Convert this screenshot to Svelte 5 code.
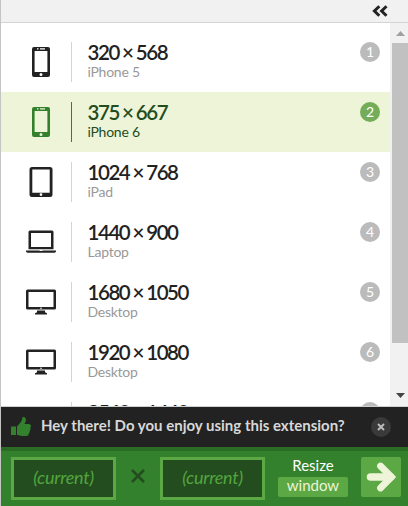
<script>
  const presets = [
    { w: 320, h: 568, name: 'iPhone 5', icon: 'phone' },
    { w: 375, h: 667, name: 'iPhone 6', icon: 'phone' },
    { w: 1024, h: 768, name: 'iPad', icon: 'tablet' },
    { w: 1440, h: 900, name: 'Laptop', icon: 'laptop' },
    { w: 1680, h: 1050, name: 'Desktop', icon: 'desktop' },
    { w: 1920, h: 1080, name: 'Desktop', icon: 'desktop' },
    { w: 2560, h: 1440, name: 'Desktop', icon: 'desktop' }
  ];
  let selected = $state(1);
</script>

<div class="popup">
  <header>
    <svg width="16" height="12" viewBox="0 0 16 12" fill="none" stroke="#222" stroke-width="3">
      <path d="M7.3 1.2 2.4 6l4.9 4.8M14.5 1.2 9.6 6l4.9 4.8" />
    </svg>
  </header>

  <main>
    <ul>
      {#each presets as p, i}
        <li class:active={i === selected}>
          <svg class="device" width="30" height="30" viewBox="0 0 30 30" fill="currentColor">
            {#if p.icon === 'phone'}
              <path fill-rule="evenodd" d="M8 0h14q2 0 2 2v26q0 2-2 2H8q-2 0-2-2V2q0-2 2-2zM8.6 4v21h12.8V4zM11 1.2v1.2h1.5V1.2zM14 1.2v1.3h5V1.2zM15 26a1.5 1.5 0 1 0 0 3 1.5 1.5 0 0 0 0-3z" />
            {:else if p.icon === 'tablet'}
              <path fill-rule="evenodd" d="M6 0h18q2.5 0 2.5 2.5v25q0 2.5-2.5 2.5H6q-2.5 0-2.5-2.5v-25Q3.500 0 6 0zM6.300 2.500v23.200h17.400V2.500zM15 26.200a1.400 1.400 0 1 0 0 2.800 1.400 1.400 0 0 0 0-2.800z" />
            {:else if p.icon === 'laptop'}
              <path fill-rule="evenodd" d="M4 3.500h22q1.500 0 1.500 1.500v17.200h-25V5q0-1.500 1.500-1.500zM5 6v14h20V6zM0 23.400h13.300l.6.7h2.200l.6-.7H30v1q-.5 1.300-2 1.300H2q-1.500 0-2-1.300z" />
            {:else}
              <path fill-rule="evenodd" d="M1.500 2.500h27q1.500 0 1.500 1.500v17q0 1.500-1.500 1.500h-27Q0 22.500 0 21V4q0-1.500 1.500-1.500zM2.500 5v15h25V5zM15 20.500a.8.800 0 1 0 0 1.600.8.800 0 0 0 0-1.600zM11 23.500h8v1.800l2 1v1.200H9v-1.200l2-1z" />
            {/if}
          </svg>
          <div class="info">
            <strong>{p.w} × {p.h}</strong>
            <span>{p.name}</span>
          </div>
          <b class="num">{i + 1}</b>
        </li>
      {/each}
    </ul>
    <div class="scrollbar">
      <svg width="16" height="20" viewBox="0 0 16 20"><path d="M4 13 8.500 8 13 13z" fill="#a0a0a0" /></svg>
      <div class="thumb"></div>
      <svg width="16" height="20" viewBox="0 0 16 20"><path d="M4 10h9L8.500 15z" fill="#444" /></svg>
    </div>
  </main>

  <section class="review">
    <svg width="20" height="20" viewBox="0 0 20 20" fill="#33802d">
      <path d="M0 9.500h5V18H0zM6 9.500l3.500-4Q11.500 3 11.500 0q2.800-.3 3.300 2 .3 2-1.300 5H18q2 .3 2 2 0 1.200-.8 1.800.8 1.700-.5 2.900.4 1.800-.8 2.500 0 2.500-2.700 2.800H11q-2.500-.2-5-1.300z" />
    </svg>
    <p>Hey there! Do you enjoy using this extension?</p>
    <button class="close" aria-label="Close">
      <svg width="8" height="8" viewBox="0 0 8 8"><path d="m1 1 6 6M7 1 1 7" stroke="#bbb" stroke-width="2" /></svg>
    </button>
  </section>

  <form>
    <div class="field">(current)</div>
    <svg class="times" width="14" height="14" viewBox="0 0 14 14"><path d="m1 1 12 12M13 1 1 13" stroke="#234d1e" stroke-width="2.600" /></svg>
    <div class="field">(current)</div>
    <div class="target">
      <span>Resize</span>
      <em>window</em>
    </div>
    <button class="go" type="button" aria-label="Resize">
      <svg width="30" height="30" viewBox="0 0 30 30" fill="none" stroke="#edf4d8" stroke-width="7.500">
        <path d="M4.500 15h20" stroke-linecap="round" /><path d="M14.500 4 25.500 15 14.500 26" stroke-linecap="round" stroke-width="6.800" />
      </svg>
    </button>
  </form>
</div>

<style>
  .popup {
    box-sizing: border-box;
    width: 408px;
    height: 506px;
    border-left: 1px solid #c4c4c4;
    display: flex;
    flex-direction: column;
    overflow: hidden;
    background: #fff;
    color: #222;
    font-family: Lato, sans-serif;
  }
  header {
    box-sizing: border-box;
    flex: none;
    height: 23px;
    padding: 5px 20px 0 0;
    display: flex;
    justify-content: flex-end;
    background: #f1f1f1;
    border-bottom: 1px solid #d4d4d4;
  }
  main {
    box-sizing: border-box;
    flex: none;
    height: 384px;
    display: flex;
    overflow: hidden;
    border-bottom: 1px solid #d0d0d0;
  }
  ul {
    flex: 1;
    margin: 0;
    padding: 9px 0 0;
    list-style: none;
  }
  li {
    box-sizing: border-box;
    height: 60px;
    padding: 10px 10px 10px 25px;
    display: flex;
  }
  li.active { background: #edf4d8; }
  .device { margin: 5px 15px 0 0; }
  .active .device { color: #33802d; }
  .info {
    flex: 1;
    height: 40px;
    padding-left: 15.5px;
    border-left: 1px solid #d4d4d4;
    display: flex;
    flex-direction: column;
  }
  .active .info { border-color: #33802d; }
  strong {
    height: 21px;
    font-size: 20.5px;
    font-weight: 600;
    line-height: 20px;
    letter-spacing: -1.45px;
    word-spacing: -.4px;
    white-space: nowrap;
  }
  .info span {
    font-size: 14px;
    line-height: 17px;
    letter-spacing: -.25px;
    color: #999;
  }
  .active strong, .active .info span { color: #234d1e; }
  .num {
    width: 20px;
    height: 20px;
    border-radius: 50%;
    background: #bbb;
    color: #fff;
    font-size: 14px;
    font-weight: 400;
    line-height: 19px;
    text-align: center;
  }
  .active .num { background: #74ac58; }
  .scrollbar {
    width: 16px;
    padding-left: 2px;
    background: #f1f1f1;
    display: flex;
    flex-direction: column;
  }
  .scrollbar svg { flex: none; }
  .thumb {
    flex: none;
    height: 300px;
    margin-bottom: 40px;
    background: #c1c1c1;
  }
  button {
    border: 0;
    padding: 0;
    display: flex;
    align-items: center;
    justify-content: center;
  }
  .review {
    box-sizing: border-box;
    flex: none;
    height: 40px;
    padding: 0 17px 0 10px;
    display: flex;
    align-items: center;
    background: #222;
  }
  p {
    flex: 1;
    margin: 0 0 4px 10px;
    font-size: 15px;
    font-weight: 700;
    line-height: 20px;
    color: #d8d8d8;
    white-space: nowrap;
  }
  .close {
    width: 20px;
    height: 20px;
    border-radius: 50%;
    background: #3a3a3a;
  }
  form {
    box-sizing: border-box;
    flex: none;
    height: 59px;
    padding: 6px 7px 0 10px;
    display: flex;
    align-items: flex-start;
    background: #33802d;
    border-top: 4px solid #2b6b25;
  }
  .field {
    box-sizing: border-box;
    width: 105px;
    height: 43px;
    border: 3px solid #5ba844;
    background: #234d1e;
    color: #54a53f;
    font-size: 18px;
    font-style: italic;
    line-height: 35px;
    letter-spacing: -.25px;
    text-align: center;
  }
  .times { margin: 12px 15px 0; }
  .target {
    width: 70px;
    margin: 0 13px;
    display: flex;
    flex-direction: column;
    text-align: center;
    font-size: 15px;
    color: #fff;
  }
  .target span { height: 20px; line-height: 17px; }
  .target em {
    height: 20px;
    border-radius: 2px;
    background: #5ba844;
    color: #edf4d8;
    font-style: normal;
    line-height: 17px;
  }
  .go {
    width: 40px;
    height: 40px;
    border-radius: 2px;
    background: #5ba844;
  }
</style>
